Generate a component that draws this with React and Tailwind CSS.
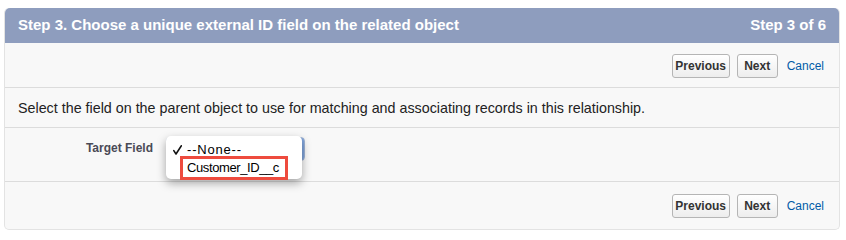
import React from "react";

const NavButtons = ({ className = "" }) => (
  <div className={`flex items-center justify-end gap-[7px] pr-[15px] ${className}`}>
    <button className="h-[24px] w-[58px] rounded-[3px] border border-[#b5b5b5] bg-gradient-to-b from-white to-[#ededed] text-[12px] font-bold text-[#333]">
      Previous
    </button>
    <button className="h-[24px] w-[41px] rounded-[3px] border border-[#b5b5b5] bg-gradient-to-b from-white to-[#ededed] text-[12px] font-bold text-[#333]">
      Next
    </button>
    <a className="ml-[2px] text-[12px] text-[#015ba7]" href="#">
      Cancel
    </a>
  </div>
);

export default function App() {
  return (
    <div className="w-[846px] h-[237px] bg-white pt-[8px] px-[4px] font-['Liberation_Sans',Arial,sans-serif]">
      <div className="w-[836px] rounded-[5px] border border-[#e3e3e3] border-t-0 bg-[#f8f8f8] overflow-visible">
        {/* header */}
        <div className="flex h-[35px] items-center justify-between rounded-t-[5px] bg-[#8e9dbe] pl-[13px] pr-[13px] text-[15px] font-bold text-white">
          <span>Step 3. Choose a unique external ID field on the related object</span>
          <span>Step 3 of 6</span>
        </div>

        <NavButtons className="h-[45px] pt-[2px] border-b border-[#dcdcdc]" />

        <div className="flex h-[40px] items-center border-b border-[#dcdcdc] pl-[13px] pt-[3px] text-[14.3px] text-[#222]">
          Select the field on the parent object to use for matching and associating records in this relationship.
        </div>

        <div className="flex h-[54px] border-b border-[#dcdcdc]">
          <div className="w-[148px] pt-[11px] text-right text-[12px] font-bold text-[#4a4a56]">
            Target Field
          </div>
          <div className="relative ml-[13px] mt-[9px]">
            {/* closed select underneath */}
            <div className="h-[24px] w-[139px] rounded-[4px] border border-[#9fb4d6] bg-gradient-to-r from-white via-white to-[#7fa4dc]" />
            {/* opened menu */}
            <div className="absolute left-0 top-[-1px] h-[43px] w-[136px] rounded-[5px] bg-white pt-[5px] text-[13px] leading-[18px] text-black shadow-[0_4px_10px_rgba(0,0,0,0.35)]">
              <div className="flex items-center">
                <span className="flex w-[21px] pl-[7px]">
                  <svg width="9" height="10" viewBox="0 0 9 10">
                    <path d="M0.8 5.6 L3 9 L8.4 0.8" fill="none" stroke="#111" strokeWidth="1.6" strokeLinejoin="round" strokeLinecap="round" />
                  </svg>
                </span>
                <span className="tracking-[0.8px]">--None--</span>
              </div>
              <div className="relative flex items-center pl-[21px]">
                <span className="tracking-[-0.4px]">Customer_ID__c</span>
                <div className="absolute left-[14px] top-[-3px] h-[24px] w-[108px] border-[3px] border-[#ee4b3e]" />
              </div>
            </div>
          </div>
        </div>

        <NavButtons className="h-[47px] pt-[0px]" />
      </div>
    </div>
  );
}
